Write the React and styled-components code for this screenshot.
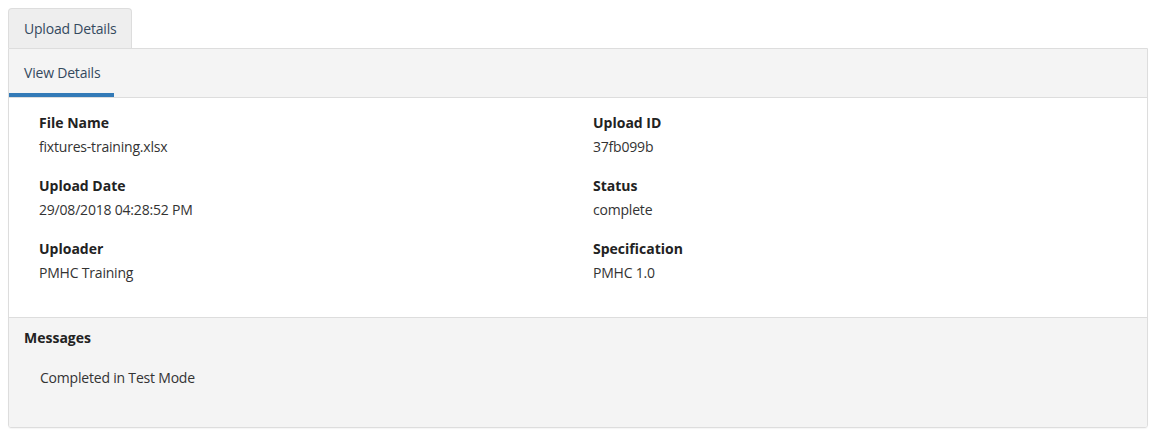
import React from 'react'
import styled, { createGlobalStyle } from 'styled-components'

const Global = createGlobalStyle`
  body {
    margin: 0;
    padding: 8px;
    background: #fff;
    font-family: "Open Sans", "Liberation Sans", sans-serif;
    font-size: 14px;
    color: #333;
    letter-spacing: -0.2px;
  }
`

const TabList = styled.div`
  display: flex;
  margin-right: 2px;
`

const OuterTab = styled.div`
  height: 40px;
  box-sizing: border-box;
  padding: 0 15px;
  display: flex;
  align-items: center;
  background: #eee;
  border: 1px solid #ddd;
  border-bottom: none;
  border-radius: 4px 4px 0 0;
  color: #34495e;
  white-space: nowrap;
`

const Panel = styled.div`
  border: 1px solid #ddd;
  border-radius: 0 0 3px 3px;
  margin-right: 2px;
  overflow: hidden;
  box-shadow: 0 1px 1px rgba(0, 0, 0, 0.04);
`

const SubNav = styled.div`
  display: flex;
  height: 48px;
  background: #f4f4f4;
  border-bottom: 1px solid #ddd;
`

const SubTab = styled.div`
  display: flex;
  align-items: center;
  padding: 2px 15px 0 15px;
  box-sizing: border-box;
  width: 105px;
  white-space: nowrap;
  color: #34495e;
  border-bottom: ${p => (p.active ? '4px solid #337ab7' : 'none')};
`

const Body = styled.div`
  display: grid;
  grid-template-columns: 1fr 1fr;
  padding: 15px 0 15px 30px;
  background: #fff;
`

const Field = styled.div`
  margin-bottom: 19px;
`

const Label = styled.div`
  font-weight: 700;
  line-height: 20px;
  letter-spacing: 0;
  color: #222;
`

const Value = styled.div`
  margin-top: 4px;
  line-height: 20px;
  color: #333;
`

const Messages = styled.div`
  background: #f4f4f4;
  border-top: 1px solid #ddd;
  padding: 10px 15px 39px;
`

const MessagesTitle = styled.div`
  font-weight: 700;
  line-height: 20px;
  letter-spacing: 0;
  color: #222;
`

const Message = styled.div`
  margin-top: 20px;
  padding-left: 16px;
  line-height: 20px;
`

const fields = [
  ['File Name', 'fixtures-training.xlsx'],
  ['Upload ID', '37fb099b'],
  ['Upload Date', '29/08/2018 04:28:52 PM'],
  ['Status', 'complete'],
  ['Uploader', 'PMHC Training'],
  ['Specification', 'PMHC 1.0']
]

export default function App() {
  return (
    <>
      <Global />
      <TabList>
        <OuterTab>Upload Details</OuterTab>
      </TabList>
      <Panel>
        <SubNav>
          <SubTab active>View Details</SubTab>
        </SubNav>
        <Body>
          {fields.map(([label, value]) => (
            <Field key={label}>
              <Label>{label}</Label>
              <Value>{value}</Value>
            </Field>
          ))}
        </Body>
        <Messages>
          <MessagesTitle>Messages</MessagesTitle>
          <Message>Completed in Test Mode</Message>
        </Messages>
      </Panel>
    </>
  )
}
